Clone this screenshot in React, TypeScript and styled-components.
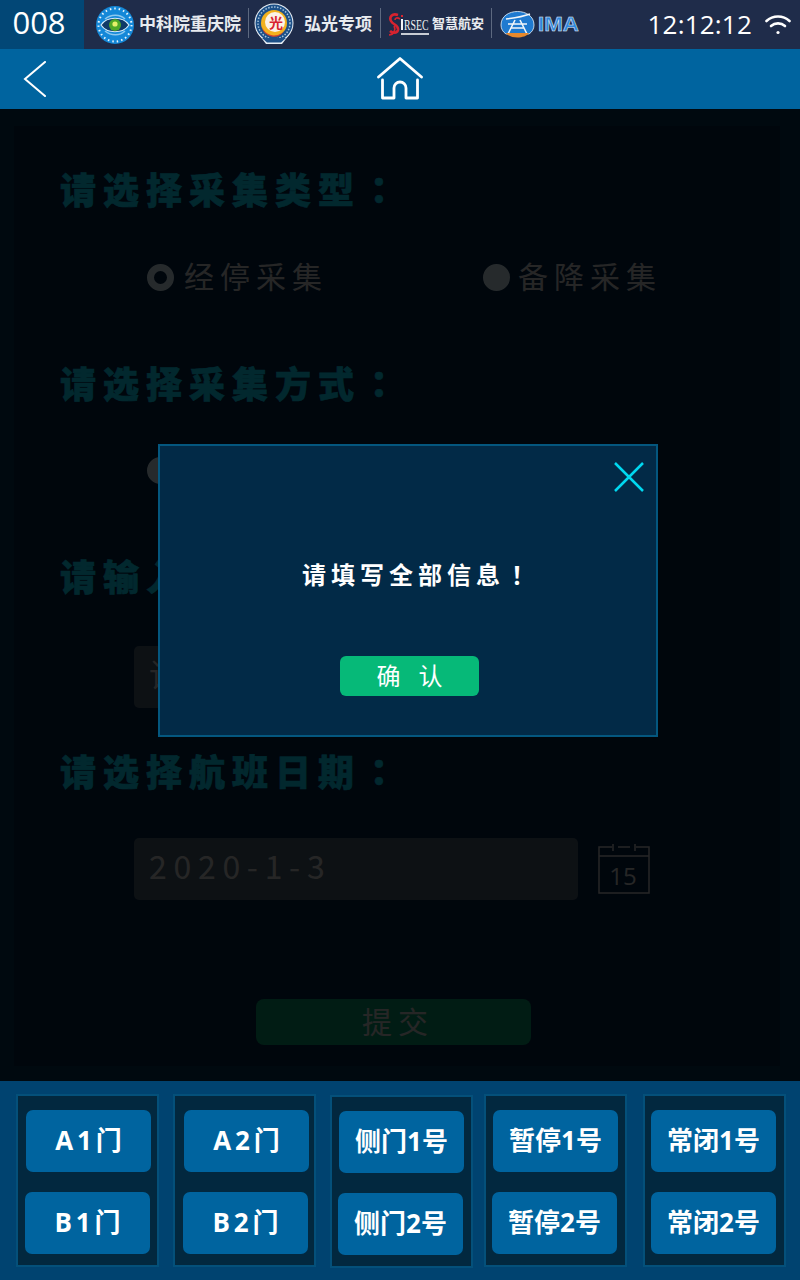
import styled, { createGlobalStyle } from "styled-components";

const GlobalStyle = createGlobalStyle`
  html, body {
    margin: 0;
    padding: 0;
    background: #000;
  }
  * {
    box-sizing: border-box;
  }
`;

const FONT = `"Open Sans", "Noto Sans CJK SC", sans-serif`;
const CJK_FONT = `"Noto Sans CJK SC", sans-serif`;

const Page = styled.div`
  width: 800px;
  height: 1280px;
  display: flex;
  flex-direction: column;
  overflow: hidden;
  font-family: ${FONT};
  color: #fff;
`;

const StatusBar = styled.div`
  height: 49px;
  flex: none;
  display: flex;
  align-items: center;
  background: #1f2c4a;
`;
const DeviceId = styled.div`
  width: 84px;
  height: 100%;
  display: flex;
  align-items: center;
  justify-content: center;
  padding: 0 6px 4px 0;
  background: #024776;
  font-size: 31px;
  line-height: 1;
`;
const LogoText = styled.span<{ $size: number; $left: number }>`
  margin: -5px 0 0 ${(p) => p.$left}px;
  font-family: ${CJK_FONT};
  font-size: ${(p) => p.$size}px;
  font-weight: 700;
  line-height: 1;
  white-space: nowrap;
  color: #e8ebef;
`;
const Divider = styled.i<{ $left: number }>`
  width: 1px;
  height: 30px;
  margin: -3px 0 0 ${(p) => p.$left}px;
  background: #5d6980;
`;
const Logo = styled.svg<{ $left: number }>`
  flex: none;
  display: block;
  margin-left: ${(p) => p.$left}px;
`;
const Clock = styled.div`
  margin-left: auto;
  padding-bottom: 2px;
  font-size: 26px;
  line-height: 1;
  letter-spacing: 0.2px;
`;
const Wifi = styled.svg`
  margin: 0 9px 0 13px;
  flex: none;
`;

const NavBar = styled.div`
  height: 60px;
  flex: none;
  display: flex;
  align-items: center;
  padding-left: 23px;
  background: #00649f;
`;
const HomeIcon = styled.svg`
  margin-left: 330px;
  flex: none;
`;

const Body = styled.div`
  position: relative;
  flex: 1;
  min-height: 0;
  padding: 17px 20px 15px 14px;
  background: #003253;
`;
const Form = styled.div`
  height: 100%;
  padding: 44px 0 0 46px;
  font-family: ${CJK_FONT};
  color: #d4d4d4;
  background: #002143;
`;
const Title = styled.div<{ $top: number }>`
  margin-top: ${(p) => p.$top}px;
  height: 40px;
  font-size: 36px;
  line-height: 37px;
  font-weight: 900;
  letter-spacing: 7px;
  color: #0bdeff;
  white-space: nowrap;
  -webkit-text-stroke: 0.6px #0bdeff;
`;
const Punct = styled.span`
  font-family: "Noto Sans CJK TC", sans-serif;
`;
const RadioRow = styled.div<{ $top: number }>`
  margin: ${(p) => p.$top}px 0 0 87px;
  height: 40px;
  display: grid;
  grid-template-columns: 336px 1fr;
`;
const RadioItem = styled.div<{ $gap: number }>`
  display: flex;
  align-items: center;
  gap: ${(p) => p.$gap}px;
  font-size: 30px;
  line-height: 40px;
  letter-spacing: 6px;
  white-space: nowrap;
`;
const RadioLabel = styled.span`
  margin-top: -4px;
`;
const RadioDot = styled.span<{ $checked?: boolean }>`
  width: 27px;
  height: 27px;
  border-radius: 50%;
  background: ${(p) => (p.$checked ? "#002143" : "#d3e9f4")};
  border: 7px solid #d3e9f4;
`;
const InputRow = styled.div<{ $top: number }>`
  margin: ${(p) => p.$top}px 0 0 74px;
  display: flex;
  align-items: center;
  gap: 20px;
`;
const Field = styled.div`
  width: 444px;
  height: 62px;
  display: flex;
  align-items: center;
  padding: 0 0 9px 15px;
  border-radius: 5px;
  background: #485e6f;
  font-size: 32px;
  line-height: 50px;
  letter-spacing: 6.7px;
`;
const SubmitRow = styled.div`
  margin: 99px 0 0 196px;
  width: 275px;
  height: 46px;
  display: flex;
  align-items: center;
  justify-content: center;
  padding: 0 0 4px 9px;
  border-radius: 8px;
  background: #0a9b6e;
  font-size: 30px;
  line-height: 40px;
  letter-spacing: 6px;
`;
const Overlay = styled.div`
  position: absolute;
  inset: 0;
  background: rgba(0, 0, 0, 0.82);
`;
const Dialog = styled.div`
  position: absolute;
  left: 158px;
  top: 335px;
  width: 500px;
  height: 293px;
  display: flex;
  flex-direction: column;
  align-items: center;
  padding-top: 110px;
  border: 2px solid #04577f;
  background: #022a47;
`;
const CloseIcon = styled.svg`
  position: absolute;
  right: 12px;
  top: 16px;
`;
const Message = styled.div`
  padding-left: 20px;
  font-family: ${CJK_FONT};
  font-size: 24px;
  line-height: 36px;
  font-weight: 700;
  letter-spacing: 5px;
  white-space: nowrap;
`;
const ConfirmButton = styled.div`
  margin: 64px 0 0 3px;
  width: 139px;
  height: 40px;
  display: flex;
  align-items: center;
  justify-content: center;
  padding: 0 0 3px 18px;
  border-radius: 6px;
  background: #06b978;
  font-size: 24px;
  letter-spacing: 18px;
  white-space: nowrap;
`;

const Footer = styled.div`
  height: 199px;
  flex: none;
  display: flex;
  align-items: flex-start;
  padding: 13px 0 0 16px;
  background: #004370;
`;
const DoorGroup = styled.div<{ $left: number; $top: number }>`
  width: 143px;
  height: 173px;
  margin: ${(p) => p.$top}px 0 0 ${(p) => p.$left}px;
  display: flex;
  flex-direction: column;
  gap: 20px;
  padding: 14px 0 0 8px;
  border: 2px solid #04507a;
  background: #02283f;
`;
const DoorButton = styled.div<{ $shift: number }>`
  width: 125px;
  height: 62px;
  margin-left: ${(p) => p.$shift}px;
  display: flex;
  align-items: center;
  justify-content: center;
  padding-bottom: 4px;
  border-radius: 7px;
  background: #00649f;
  font-size: 26px;
  font-weight: 700;
  word-spacing: -3px;
  white-space: pre;
`;

const groups = [
  { left: 0, top: 0, first: "A 1 门", second: "B 1 门", shift: [0, -1] },
  { left: 14, top: 0, first: "A 2 门", second: "B 2 门", shift: [1, 0] },
  { left: 14, top: 1, first: "侧门1号", second: "侧门2号", shift: [-1, -2] },
  { left: 11, top: 0, first: "暂停1号", second: "暂停2号", shift: [-1, -2] },
  { left: 16, top: 0, first: "常闭1号", second: "常闭2号", shift: [-2, -2] },
];

const EyeLogo = () => (
  <Logo $left={12} width="38" height="38" viewBox="0 0 38 38">
    <circle cx="19" cy="19" r="19" fill="#1488d8" />
    <circle cx="19" cy="19" r="16.5" fill="none" stroke="#e8f4fc" strokeWidth="2" strokeDasharray="1.5 3" />
    <path d="M5 19 C11 10 27 10 33 19 C27 28 11 28 5 19 Z" fill="#0f3a68" stroke="#d8ecf8" strokeWidth="1.2" />
    <path d="M9 13 C15 8 24 8 29 13" fill="none" stroke="#8cc8ee" strokeWidth="1.5" />
    <path d="M9 25 C15 30 24 30 29 25" fill="none" stroke="#8cc8ee" strokeWidth="1.5" />
    <circle cx="19" cy="19" r="6" fill="#4ea828" />
    <circle cx="19" cy="18" r="2.6" fill="#e6f06a" />
  </Logo>
);

const BadgeLogo = () => (
  <Logo $left={5} width="40" height="44" viewBox="0 0 40 44">
    <path d="M5 32 L12 41 H28 L35 32 Z" fill="#e8eef4" />
    <circle cx="20" cy="20" r="19.5" fill="#e8eef4" />
    <circle cx="20" cy="20" r="18.5" fill="#1c5088" />
    <circle cx="20" cy="20" r="16" fill="none" stroke="#a8c4dc" strokeWidth="1.5" strokeDasharray="1.5 1.5" />
    <path d="M8 35 H32 L27 39.5 H13 Z" fill="#1c5088" />
    <circle cx="20" cy="20" r="13" fill="#f2b21e" />
    <circle cx="21" cy="19" r="10" fill="#fbf2e6" />
    <path d="M8 24 A13 13 0 0 0 30 28 A12 12 0 0 1 8 24 Z" fill="#d8442c" />
    <text x="22" y="25" textAnchor="middle" fontFamily="Noto Sans CJK SC, sans-serif" fontWeight="700" fontSize="14" fill="#d8232f">光</text>
  </Logo>
);

const SirsecLogo = () => (
  <Logo $left={7} width="44" height="26" viewBox="0 0 44 26">
    <path d="M10 3 C4 1 1 5 3 9 C5 13 11 13 10 18 C9 22 4 21 2 19" fill="none" stroke="#d8232f" strokeWidth="2.6" />
    <path d="M12 7 C9 5 7 6 7 8 M6 14 C8 17 6 23 1 23" fill="none" stroke="#d8232f" strokeWidth="1.6" />
    <rect x="13" y="3" width="2" height="2" fill="#d8232f" />
    <rect x="13" y="7" width="2" height="11" fill="#f2f4f6" />
    <text transform="translate(16 18) scale(0.7 1)" fontFamily="Liberation Serif, serif" fontSize="14" fill="#f2f4f6">RSEC</text>
    <rect x="13" y="21" width="28" height="2" fill="#c8ccd4" />
  </Logo>
);

const ImaLogo = () => (
  <Logo $left={8} width="80" height="30" viewBox="0 0 80 30">
    <path d="M1 15 C1 -3 34 -3 34 15 C34 19 32 22 29 24 H6 C3 22 1 19 1 15 Z" fill="#1f7ad0" stroke="#e8f2fa" strokeWidth="0.8" />
    <path d="M6 9 C14 8 22 7 30 4 M8 14 H27 M11 18 H24 M15 10 L8 24 M20 10 L27 24" fill="none" stroke="#f2f6fa" strokeWidth="1.6" />
    <path d="M6 23 H29 C25 29 10 29 6 23 Z" fill="#e8892c" />
    <text x="38" y="21" fontFamily="Liberation Sans, sans-serif" fontWeight="700" fontSize="21" fill="#2f86dc" stroke="#e8f2fa" strokeWidth="0.5" textLength="41" lengthAdjust="spacingAndGlyphs">IMA</text>
  </Logo>
);

const CalendarIcon = () => (
  <svg width="52" height="50" viewBox="0 0 52 50" fill="none" stroke="#d4d4d4" strokeWidth="1.5">
    <path d="M1 12 V3 H14 M20 3 H32 M38 3 H51 V12 M1 12 H51 V49 H1 Z M15 0 V7 M37 0 V7" />
    <text x="25" y="41" textAnchor="middle" fontFamily="Open Sans, sans-serif" fontSize="24" fill="#d4d4d4" stroke="none">15</text>
  </svg>
);

const App = () => {
  return (
    <Page>
      <GlobalStyle />
      <StatusBar>
        <DeviceId>008</DeviceId>
        <EyeLogo />
        <LogoText $left={5} $size={17}>中科院重庆院</LogoText>
        <Divider $left={7} />
        <BadgeLogo />
        <LogoText $left={10} $size={17}>弘光专项</LogoText>
        <Divider $left={8} />
        <SirsecLogo />
        <LogoText $left={0} $size={13}>智慧航安</LogoText>
        <Divider $left={7} />
        <ImaLogo />
        <Clock>12:12:12</Clock>
        <Wifi width="26" height="22" viewBox="0 0 26 22" fill="none" stroke="#fff" strokeWidth="2.6" strokeLinecap="round">
          <path d="M1.5 7 C8 1 18 1 24.5 7" />
          <path d="M6 12 C10 8.5 16 8.5 20 12" />
          <circle cx="13" cy="18.5" r="1.6" fill="#fff" stroke="none" />
        </Wifi>
      </StatusBar>

      <NavBar>
        <svg width="24" height="36" viewBox="0 0 24 36" fill="none" stroke="#fff" strokeWidth="2" strokeLinecap="round">
          <path d="M22 1 L2 18 L22 35" />
        </svg>
        <HomeIcon width="46" height="44" viewBox="0 0 46 44" fill="none" stroke="#fff" strokeWidth="2.8" strokeLinecap="round" strokeLinejoin="round">
          <path d="M1.5 20 L23 1.5 L44.5 20" />
          <path d="M5.5 23 V41 H17 V31 A6 6 0 0 1 29 31 V41 H40.5 V23" />
        </HomeIcon>
      </NavBar>

      <Body>
        <Form>
          <Title $top={0}>请选择采集类型<Punct>：</Punct></Title>
          <RadioRow $top={47}>
            <RadioItem $gap={10}><RadioDot $checked /><RadioLabel>经停采集</RadioLabel></RadioItem>
            <RadioItem $gap={8}><RadioDot /><RadioLabel>备降采集</RadioLabel></RadioItem>
          </RadioRow>
          <Title $top={67}>请选择采集方式<Punct>：</Punct></Title>
          <RadioRow $top={46}>
            <RadioItem $gap={10}><RadioDot /></RadioItem>
          </RadioRow>
          <Title $top={67}>请输入</Title>
          <InputRow $top={49}>
            <Field>请输入</Field>
          </InputRow>
          <Title $top={44}>请选择航班日期<Punct>：</Punct></Title>
          <InputRow $top={46}>
            <Field>2020-1-3</Field>
            <CalendarIcon />
          </InputRow>
          <SubmitRow>提交</SubmitRow>
        </Form>
        <Overlay />
        <Dialog>
          <CloseIcon width="30" height="30" viewBox="0 0 30 30" fill="none" stroke="#00d8f0" strokeWidth="2.5">
            <path d="M1 1 L29 29 M29 1 L1 29" />
          </CloseIcon>
          <Message>请填写全部信息<Punct>！</Punct></Message>
          <ConfirmButton>确认</ConfirmButton>
        </Dialog>
      </Body>

      <Footer>
        {groups.map((g) => (
          <DoorGroup key={g.first} $left={g.left} $top={g.top}>
            <DoorButton $shift={g.shift[0]}>{g.first}</DoorButton>
            <DoorButton $shift={g.shift[1]}>{g.second}</DoorButton>
          </DoorGroup>
        ))}
      </Footer>
    </Page>
  );
};

export default App;
